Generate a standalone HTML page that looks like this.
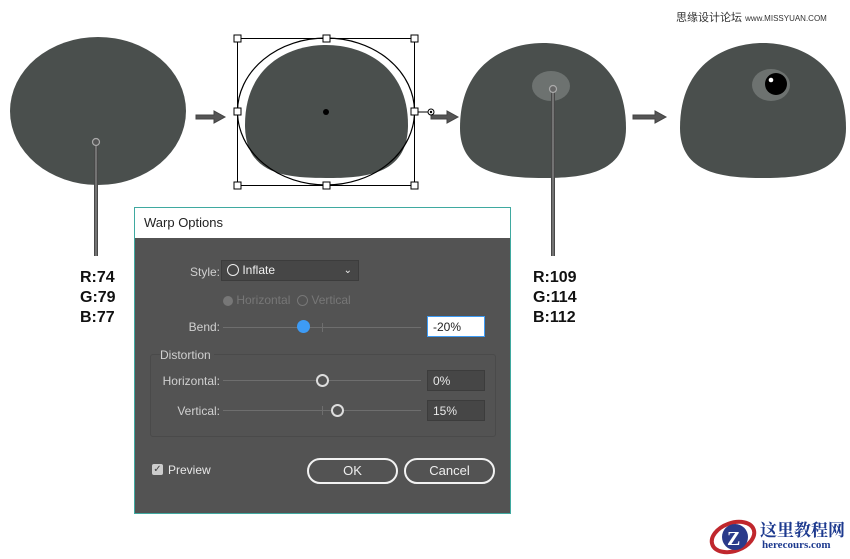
<!DOCTYPE html>
<html><head><meta charset="utf-8"><style>
body{margin:0;width:850px;height:559px;background:#fff;position:relative;overflow:hidden;font-family:"Liberation Sans",Arial,sans-serif}
.rgb{position:absolute;font-weight:bold;font-size:16px;line-height:20px;color:#111}
.dlg{position:absolute;left:134px;top:207px;width:375px;height:305px;border:1px solid #3fa9a0;background:#535353}
.tb{height:30px;background:#fff;font-size:13px;color:#222;line-height:30px;padding-left:9px}
.lbl{position:absolute;font-size:12px;color:#d0d0d0;text-align:right}
.dim{color:#777}
.fld{position:absolute;background:#464646;border:1px solid #3c3c3c;color:#e8e8e8;font-size:12px;line-height:20px;padding-left:5px;box-sizing:border-box;height:21px}
.track{position:absolute;height:1px;background:#6e6e6e}
.btn{position:absolute;border:2px solid #f2f2f2;border-radius:13px;color:#eee;font-size:13px;text-align:center;box-sizing:border-box;height:26px;line-height:22px}
.knob{position:absolute;width:9px;height:9px;border:2px solid #ddd;border-radius:50%;background:#535353}
</style></head><body>
<div style="position:absolute;left:676px;top:9px;font-size:11px;color:#333;font-family:'Liberation Sans','Noto Sans CJK SC',sans-serif;white-space:nowrap">思缘设计论坛 <span style="font-size:8px">www.MISSYUAN.COM</span></div>
<svg width="850" height="559" style="position:absolute;left:0;top:0">
<defs><linearGradient id="ln" x1="0" x2="1"><stop offset="0" stop-color="#333"/><stop offset=".5" stop-color="#888"/><stop offset="1" stop-color="#333"/></linearGradient></defs>
<ellipse cx="98" cy="111" rx="88" ry="74" fill="#4a4f4d"/>
<rect x="94" y="143" width="4" height="113" fill="url(#ln)"/>
<circle cx="96" cy="142" r="3.5" fill="#555" stroke="#aaa" stroke-width="1.2"/>
<g fill="#555" stroke="#444">
<path d="M196,115 h18 v-4 l11,6 l-11,6 v-4 h-18z"/>
<path d="M431,115 h16 v-4 l11,6 l-11,6 v-4 h-16z"/>
<path d="M633,115 h22 v-4 l11,6 l-11,6 v-4 h-22z"/>
</g>
<path d="M245,125 C245,65 290,45 326,45 C362,45 408,65 408,125 C408,175 365,178 326,178 C287,178 245,175 245,125Z" fill="#4a4f4d"/>
<ellipse cx="326" cy="111.5" rx="88.5" ry="73.5" fill="none" stroke="#000" stroke-width="1.2"/>
<rect x="237.5" y="38.5" width="177" height="147" fill="none" stroke="#000"/>
<g fill="#fff" stroke="#000">
<rect x="234" y="35" width="7" height="7"/><rect x="323" y="35" width="7" height="7"/><rect x="411" y="35" width="7" height="7"/>
<rect x="234" y="108" width="7" height="7"/><rect x="411" y="108" width="7" height="7"/>
<rect x="234" y="182" width="7" height="7"/><rect x="323" y="182" width="7" height="7"/><rect x="411" y="182" width="7" height="7"/>
</g>
<circle cx="326" cy="112" r="3" fill="#000"/>
<line x1="418" y1="112" x2="431" y2="112" stroke="#000"/>
<circle cx="431" cy="112" r="3" fill="#fff" stroke="#000"/><circle cx="431" cy="112" r="1.2" fill="#000"/>
<path d="M460,128 C460,62 508,43 543,43 C578,43 626,62 626,128 C626,174 582,178 543,178 C504,178 460,174 460,128Z" fill="#4a4f4d"/>
<ellipse cx="551" cy="86" rx="19" ry="15" fill="#6d7270"/>
<rect x="551" y="89" width="4" height="167" fill="url(#ln)"/>
<circle cx="553" cy="89" r="3.5" fill="#666" stroke="#aaa" stroke-width="1.2"/>
<path d="M680,128 C680,62 728,43 763,43 C798,43 846,62 846,128 C846,174 802,178 763,178 C724,178 680,174 680,128Z" fill="#4a4f4d"/>
<ellipse cx="771" cy="85" rx="19" ry="16" fill="#6d7270"/>
<circle cx="776" cy="84" r="11" fill="#000"/>
<circle cx="771" cy="80" r="2.3" fill="#fff"/>
<ellipse cx="733" cy="537" rx="22" ry="14" fill="none" stroke="#c0272d" stroke-width="4" transform="rotate(-20 733 537)"/>
<circle cx="735" cy="537" r="13" fill="#2a3a8a"/>
<text x="727" y="545" font-family="Liberation Serif" font-weight="bold" font-size="20" fill="#fff">Z</text>
</svg>
<div style="position:absolute;left:760px;top:516px;font-family:'Liberation Serif','Noto Serif CJK SC',serif;font-weight:bold;font-size:17px;color:#1d3a8f">这里教程网</div>
<div style="position:absolute;left:762px;top:539px;font-family:'Liberation Serif',serif;font-weight:bold;font-size:11px;color:#1d3a8f">herecours.com</div>
<div class="rgb" style="left:80px;top:268px">R:74<br>G:79<br>B:77</div>
<div class="rgb" style="left:533px;top:268px">R:109<br>G:114<br>B:112</div>
<div class="dlg">
<div class="tb">Warp Options</div>
<div class="lbl" style="left:30px;top:57px;width:55px">Style:</div>
<div style="position:absolute;left:86px;top:52px;width:138px;height:21px;background:#464646;border:1px solid #3c3c3c;box-sizing:border-box;color:#f0f0f0;font-size:12px;line-height:19px">
<span style="display:inline-block;width:10px;height:10px;border:1px solid #eee;border-radius:50%;vertical-align:-2px;margin-left:5px"></span> Inflate
<span style="position:absolute;right:6px;top:0;font-size:10px">&#8964;</span></div>
<div class="lbl dim" style="left:88px;top:85px"><span style="display:inline-block;width:10px;height:10px;border-radius:50%;background:#777;vertical-align:-2px"></span> Horizontal &nbsp;<span style="display:inline-block;width:9px;height:9px;border:1px solid #777;border-radius:50%;vertical-align:-2px"></span> Vertical</div>
<div class="lbl" style="left:30px;top:112px;width:55px">Bend:</div>
<div class="track" style="left:88px;top:119px;width:198px"></div>
<div style="position:absolute;left:187px;top:115px;width:1px;height:9px;background:#6e6e6e"></div>
<div style="position:absolute;left:162px;top:112px;width:13px;height:13px;border-radius:50%;background:#3d9bf5"></div>
<div class="fld" style="left:292px;top:108px;width:58px;background:#fff;color:#222;border:1px solid #3d9bf5">-20%</div>
<div style="position:absolute;left:15px;top:146px;width:344px;height:81px;border:1px solid #4a4a4a;border-radius:3px"></div>
<div class="lbl" style="left:25px;top:140px;background:#535353;padding-right:3px">Distortion</div>
<div class="lbl" style="left:20px;top:166px;width:65px">Horizontal:</div>
<div class="track" style="left:88px;top:172px;width:198px"></div>
<div class="knob" style="left:181px;top:166px"></div>
<div class="fld" style="left:292px;top:162px;width:58px">0%</div>
<div class="lbl" style="left:20px;top:196px;width:65px">Vertical:</div>
<div class="track" style="left:88px;top:202px;width:198px"></div>
<div style="position:absolute;left:187px;top:198px;width:1px;height:9px;background:#6e6e6e"></div>
<div class="knob" style="left:196px;top:196px"></div>
<div class="fld" style="left:292px;top:192px;width:58px">15%</div>
<div style="position:absolute;left:17px;top:256px;width:11px;height:11px;background:#ccc;border-radius:2px;color:#444;font-size:10px;line-height:11px;text-align:center">✓</div>
<div class="lbl" style="left:33px;top:255px;color:#e8e8e8">Preview</div>
<div class="btn" style="left:172px;top:250px;width:91px">OK</div>
<div class="btn" style="left:269px;top:250px;width:91px">Cancel</div>
</div>
</body></html>
